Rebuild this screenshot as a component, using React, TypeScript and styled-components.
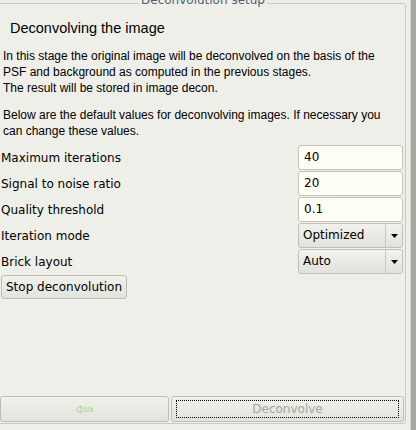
import React from "react";
import styled, { createGlobalStyle } from "styled-components";

const Global = createGlobalStyle`
  html, body { margin: 0; padding: 0; background: #efefe9; overflow: hidden; }
  body { width: 416px; height: 430px; font-family: "DejaVu Sans", sans-serif; }
`;

const Page = styled.div`
  display: flex;
  width: 416px;
  height: 430px;
  overflow: hidden;
`;

const Frame = styled.fieldset`
  box-sizing: border-box;
  flex: 0 0 409px;
  width: 409px;
  height: 431px;
  margin: -7px 0 0 -3px;
  padding: 0 0 0 3px;
  border: 1px solid #c9c9c2;
  border-radius: 3px;
  display: flex;
  flex-direction: column;
  min-width: 0;
`;

const Legend = styled.legend`
  margin: 0 auto;
  padding: 0 2px 6px 2px;
  font-family: "DejaVu Sans", sans-serif;
  font-size: 12px;
  line-height: 14px;
  color: #4a6075;
`;

const Side = styled.div`
  flex: 0 0 5px;
  margin-left: 4px;
  height: 430px;
  background: #a7a7a1;
  border-left: 1px solid #d2d2cb;
`;

const Heading = styled.h1`
  margin: 6px 0 0 9px;
  font-family: "Liberation Sans", Arial, sans-serif;
  font-weight: normal;
  font-size: 14.5px;
  line-height: 18px;
  color: #000;
`;

const Para = styled.p<{ $top: number }>`
  margin: ${(p) => p.$top}px 0 0 2px;
  font-family: "Liberation Sans", Arial, sans-serif;
  font-size: 12px;
  line-height: 16px;
  color: #000;
`;

const Form = styled.div`
  display: grid;
  grid-template-columns: 1fr 105px;
  row-gap: 1px;
  margin-top: 6px;
  margin-right: 2px;
  align-items: center;
`;

const Label = styled.div`
  font-size: 12px;
  color: #000;
  line-height: 24px;
`;

const Input = styled.div`
  box-sizing: border-box;
  height: 25px;
  background: #fffff5;
  border: 1px solid #c4c4bc;
  border-radius: 3px;
  padding: 0 5px;
  font-size: 12px;
  line-height: 23px;
  color: #000;
`;

const Combo = styled.div`
  box-sizing: border-box;
  height: 25px;
  display: flex;
  background: linear-gradient(#f3f3ee, #e2e2dc);
  border: 1px solid #c0c0b8;
  border-radius: 3px;
  font-size: 12px;
  line-height: 23px;
  color: #000;
`;

const ComboText = styled.div`
  flex: 1;
  padding-left: 4px;
`;

const ComboArrow = styled.div`
  width: 16px;
  border-left: 1px solid #c8c8c0;
  display: flex;
  align-items: center;
  justify-content: center;
`;

const Button = styled.button<{ $disabled?: boolean }>`
  box-sizing: border-box;
  height: 24px;
  font-family: "DejaVu Sans", sans-serif;
  font-size: 12px;
  color: ${(p) => (p.$disabled ? "#a4a49e" : "#000")};
  background: linear-gradient(#f2f2ed, #e3e3dd);
  border: 1px solid #bdbdb6;
  border-radius: 3px;
  padding: 0 4px;
  display: flex;
  align-items: center;
  justify-content: center;
`;

const StopRow = styled.div`
  margin-top: 1px;
  display: flex;
`;

const Spacer = styled.div`
  flex: 1;
`;

const Bottom = styled.div`
  display: grid;
  grid-template-columns: 169px 1fr;
  column-gap: 2px;
  margin: 0 1px 1px -1px;
  height: 26px;
`;

const BigButton = styled(Button)`
  height: 26px;
  width: 100%;
`;

const Focus = styled.div`
  box-sizing: border-box;
  width: 100%;
  height: 18px;
  border: 1px dotted #000;
  display: flex;
  align-items: center;
  justify-content: center;
`;

function Arrow() {
  return (
    <svg width="7" height="4" viewBox="0 0 7 4">
      <path d="M0 0H7L3.5 4Z" fill="#000" />
    </svg>
  );
}

export default function App() {
  return (
    <Page>
      <Global />
      <Frame>
        <Legend>Deconvolution setup</Legend>
        <Heading>Deconvolving the image</Heading>
        <Para $top={11}>
          In this stage the original image will be deconvolved on the basis of the
          <br />
          PSF and background as computed in the previous stages.
          <br />
          The result will be stored in image decon.
        </Para>
        <Para $top={11}>
          Below are the default values for deconvolving images. If necessary you
          <br />
          can change these values.
        </Para>
        <Form>
          <Label>Maximum iterations</Label>
          <Input>40</Input>
          <Label>Signal to noise ratio</Label>
          <Input>20</Input>
          <Label>Quality threshold</Label>
          <Input>0.1</Input>
          <Label>Iteration mode</Label>
          <Combo>
            <ComboText>Optimized</ComboText>
            <ComboArrow>
              <Arrow />
            </ComboArrow>
          </Combo>
          <Label>Brick layout</Label>
          <Combo>
            <ComboText>Auto</ComboText>
            <ComboArrow>
              <Arrow />
            </ComboArrow>
          </Combo>
        </Form>
        <StopRow>
          <Button>Stop deconvolution</Button>
        </StopRow>
        <Spacer />
        <Bottom>
          <BigButton $disabled>
            <svg width="17" height="9" viewBox="0 0 17 9">
              <path
                d="M0.5 4.5L4.5 0.5V3H16.5V6H4.5V8.5Z"
                fill="#dcefd2"
                stroke="#86b070"
                strokeWidth="1"
                strokeDasharray="1 1"
              />
            </svg>
          </BigButton>
          <BigButton $disabled>
            <Focus>Deconvolve</Focus>
          </BigButton>
        </Bottom>
      </Frame>
      <Side />
    </Page>
  );
}
